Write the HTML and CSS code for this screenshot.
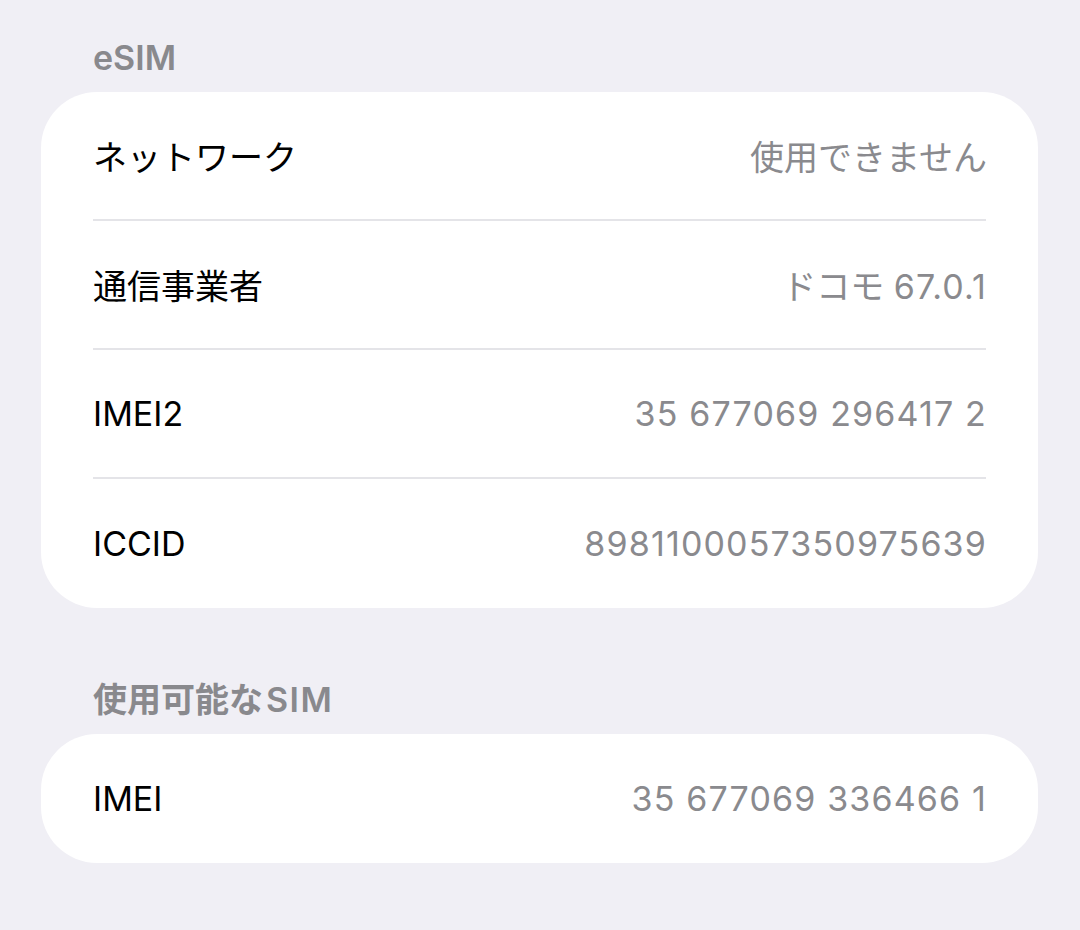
FILE: index.html
```html
<!DOCTYPE html>
<html lang="ja">
<head>
<meta charset="utf-8">
<title>eSIM</title>
<link rel="stylesheet" href="styles.css">
</head>
<body>
<main class="page">
  <section class="group">
    <h2 class="group-header">eSIM</h2>
    <div class="card">
      <div class="row"><div class="row-inner"><span class="label">ネットワーク</span><span class="value">使用できません</span></div></div>
      <div class="row"><div class="row-inner"><span class="label">通信事業者</span><span class="value">ドコモ <span class="num">67.0.1</span></span></div></div>
      <div class="row"><div class="row-inner"><span class="label">IMEI2</span><span class="value"><span class="num">35 677069 296417 2</span></span></div></div>
      <div class="row"><div class="row-inner"><span class="label">ICCID</span><span class="value"><span class="num">8981100057350975639</span></span></div></div>
    </div>
  </section>
  <section class="group group-second">
    <h2 class="group-header">使用可能な<span class="latin">SIM</span></h2>
    <div class="card">
      <div class="row"><div class="row-inner"><span class="label">IMEI</span><span class="value"><span class="num">35 677069 336466 1</span></span></div></div>
    </div>
  </section>
</main>
</body>
</html>
```
FILE: styles.css
```css
html, body {
  margin: 0;
  padding: 0;
  background: #f0eff5;
}
body {
  font-family: Inter, "Noto Sans CJK JP", sans-serif;
  color: #000;
  width: 1080px;
  height: 930px;
  overflow: hidden;
}
.page {
  padding: 38px 42px 0 41px;
}
.group-second {
  margin-top: 72px;
}
.group-header {
  margin: 0 0 14px 0;
  padding-left: 52px;
  font-size: 34px;
  line-height: 40px;
  height: 40px;
  font-weight: 600;
  color: #89898d;
}
.latin {
  margin-left: 3px;
  letter-spacing: 1.5px;
}
.card {
  background: #fff;
  border-radius: 56px;
  overflow: hidden;
}
.row {
  height: 129px;
  padding: 0 52px;
}
.row-inner {
  height: 129px;
  box-sizing: border-box;
  display: flex;
  align-items: center;
  justify-content: space-between;
  border-bottom: 2px solid #e4e4e8;
  font-size: 34px;
}
.row:last-child .row-inner {
  border-bottom: none;
}
.label {
  color: #000;
  white-space: nowrap;
}
.value {
  color: #8a8a8e;
  white-space: nowrap;
  margin-right: -1px;
}
.num {
  letter-spacing: 1.15px;
}
```
